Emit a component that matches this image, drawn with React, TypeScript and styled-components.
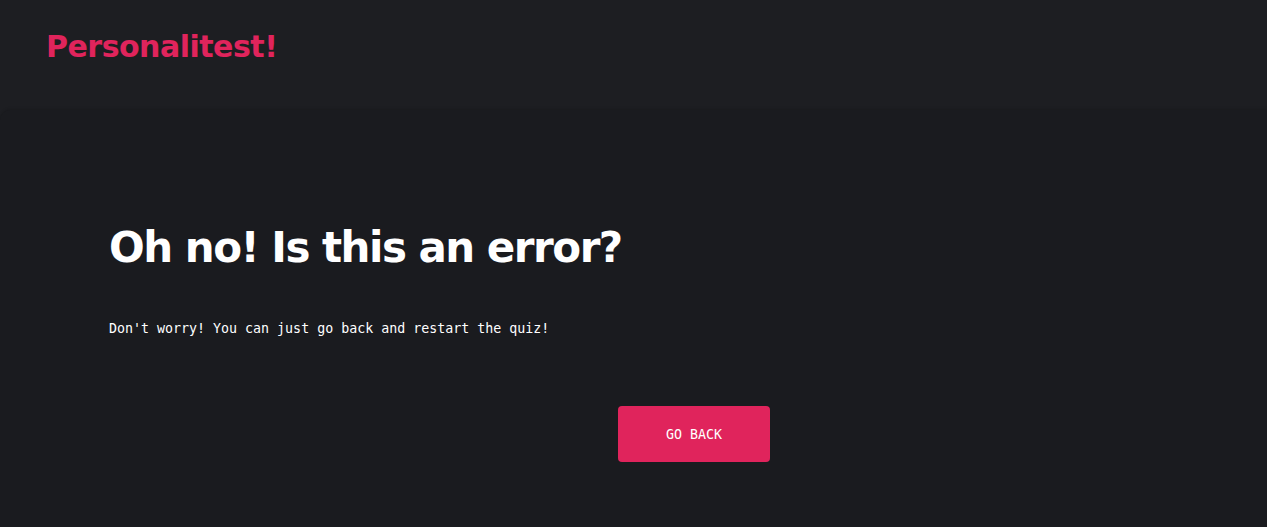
import React from "react";
import styled, { createGlobalStyle } from "styled-components";

const Global = createGlobalStyle`
  html, body { margin: 0; padding: 0; background: #1d1e22; }
  body { width: 1267px; height: 527px; overflow: hidden; }
`;

const Page = styled.div`
  display: flex;
  flex-direction: column;
  height: 527px;
  background: #1d1e22;
`;

const Header = styled.header`
  height: 110px;
  flex-shrink: 0;
  display: flex;
  align-items: flex-start;
  padding: 29px 0 0 46px;
  box-sizing: border-box;
`;

const Logo = styled.h1`
  margin: 0;
  font-family: "DejaVu Sans", sans-serif;
  font-weight: 700;
  font-size: 30px;
  letter-spacing: -0.5px;
  color: #e0245c;
`;

const Main = styled.main`
  flex: 1;
  background: #1a1b1f;
  border-top-left-radius: 10px;
  box-shadow: 0 -1px 3px rgba(0, 0, 0, 0.15);
  padding: 110px 0 0 109px;
  box-sizing: border-box;
`;

const Title = styled.h2`
  margin: 0;
  font-family: "DejaVu Sans", sans-serif;
  font-weight: 700;
  font-size: 42px;
  letter-spacing: -1.5px;
  line-height: 56px;
  color: #ffffff;
`;

const Text = styled.p`
  margin: 44px 0 0;
  font-family: "DejaVu Sans Mono", monospace;
  font-size: 13.3px;
  line-height: 18px;
  color: #ffffff;
`;

const ButtonRow = styled.div`
  margin-top: 68px;
  padding-left: 509px;
`;

const Button = styled.button`
  width: 152px;
  height: 56px;
  border: none;
  border-radius: 4px;
  background: #e0245c;
  color: #ffffff;
  font-family: "DejaVu Sans Mono", monospace;
  font-size: 13.3px;
  cursor: pointer;
`;

export default function App() {
  return (
    <>
      <Global />
      <Page>
        <Header>
          <Logo>Personalitest!</Logo>
        </Header>
        <Main>
          <Title>Oh no! Is this an error?</Title>
          <Text>Don't worry! You can just go back and restart the quiz!</Text>
          <ButtonRow>
            <Button>GO BACK</Button>
          </ButtonRow>
        </Main>
      </Page>
    </>
  );
}
